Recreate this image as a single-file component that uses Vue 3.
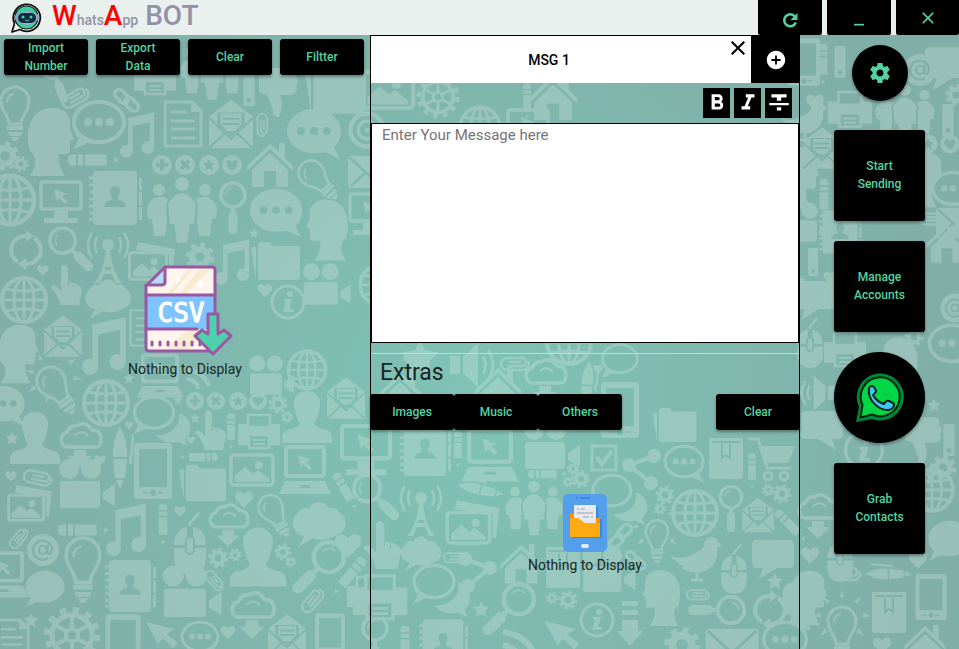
<script setup>
import { ref } from 'vue'

const message = ref('')

// Backdrop doodles: each entry is [x, y, scale, rotation, flip]
const doodles = {
  bulb: [[15, 112, 1], [318, 180, .9, -45], [275, 515, .85, -30], [83, 568, 1.2], [57, 390, 1, -35], [657, 540, .8], [842, 632, 1]],
  rays: [[57, 382, 1, -35], [657, 534, .9], [842, 624, 1]],
  head: [[50, 142, 1], [328, 230, .9, 0, 1], [18, 354, .86], [662, 598, .82, 0, 1], [798, 178, .9], [925, 180, .8], [808, 598, .8], [797, 606, .7, 0, 1], [900, 365, .8, 0, 1]],
  dots: [[314, 133, 1], [276, 212, .97], [3, 405, .8]],
  dotsO: [[99, 124, 1, 0, 1], [200, 638, .72], [684, 463, .76], [953, 190, .8], [952, 345, .9], [785, 641, .85]],
  bubble: [[45, 588, .72, 0, 1], [950, 540, .8, 0, 1], [870, 192, .9]],
  bubbleO: [[154, 414, .78, 0, 1], [612, 492, .76, 0, 1], [434, 583, .8, 0, 1], [620, 360, .7, 0, 1]],
  back: [[175, 428, 1], [632, 507, 1], [454, 598, 1.05]],
  rect: [[773, 557, 1, 0, 1], [948, 66, 1.1, 0, 1], [815, 298, 1, 0, 1], [822, 428, 1]],
  note: [[138, 135, .9], [233, 262, .9], [105, 346, 1.15], [127, 530, 1.05]],
  doc: [[183, 124, 1], [145, 328, .8], [12, 640, .9]],
  mail: [[231, 124, 1.05], [63, 336, .9], [346, 398, .9], [287, 635, .9], [758, 515, .75], [822, 148, .9]],
  envelope: [[370, 172, 1], [732, 648, 1.2], [957, 223, .95]],
  clip: [[75, 97, 1, -30], [263, 125, .8, 90], [38, 477, 1, 12], [18, 538, .8, -50], [312, 600, .95, -50], [215, 580, .8, 50], [455, 557, .8], [698, 594, .8], [515, 363, 1], [932, 218, .9], [846, 573, 1]],
  chain: [[127, 100, 1], [620, 536, 1, -90], [636, 560, .8]],
  pencil: [[92, 160, 1], [200, 457, .75, 180], [82, 530, 1], [163, 523, .8, 90], [231, 430, .7, 90], [345, 490, .8, 60], [350, 575, .9, 130], [752, 470, .7, 90], [546, 474, .75], [790, 525, .8, 45], [405, 645, .8, 90], [823, 63, .8, 90], [824, 198, .8, 90], [458, 448, .7, 90], [527, 100, .7, 90]],
  globe: [[10, 200, 1.1], [24, 300, 1], [106, 403, 1], [695, 513, 1], [932, 490, .95], [569, 342, 1], [480, 127, .9], [380, 285, .9], [307, 370, .85]],
  monitor: [[61, 202, 1], [370, 214, 1], [366, 450, 1.2], [528, 130, 1]],
  contacts: [[115, 198, 1], [130, 586, .96], [425, 450, .96], [443, 644, .92], [840, 232, .8]],
  people: [[182, 210, 1], [212, 70, .9], [534, 508, .82], [905, 112, .85]],
  lens: [[233, 205, 1], [70, 248, 1.05, -45], [320, 566, 1.25, 45], [375, 496, 1.1, -45], [731, 506, .9], [720, 610, 1.1, 90], [510, 608, 1.25, 45], [375, 638, 1], [55, 75, 1, -20]],
  house: [[270, 163, 1], [521, 562, .9], [400, 392, 1], [498, 387, 1], [553, 95, 1.05], [947, 241, .9], [925, 643, .9]],
  plus: [[162, 165, 1], [195, 401, .9]],
  cross: [[185, 165, 1], [216, 401, .9]],
  starBadge: [[209, 165, 1], [238, 401, .9], [928, 144, .95]],
  heartBadge: [[232, 165, 1], [258, 401, .9], [950, 144, .95]],
  gear: [[5, 156, 1.2], [21, 164, .65], [200, 257, 1.2], [278, 404, .8], [287, 417, .5], [218, 558, .85], [235, 555, .55], [283, 552, .7], [291, 562, .45], [573, 469, .5], [581, 479, .75], [568, 482, .45], [665, 495, .8], [660, 509, .5], [768, 490, .5], [782, 494, .8], [552, 598, .5], [568, 600, .8], [682, 645, 1.5], [914, 337, .8], [898, 344, .6], [943, 468, 1.1], [926, 478, .55], [956, 95, .9]],
  wheel: [[72, 635, 1.25], [438, 97, .95]],
  reload: [[26, 250, 1], [770, 610, 1]],
  tower: [[108, 257, 1], [421, 510, 1]],
  photos: [[152, 261, 1], [30, 503, .95], [473, 522, 1.15]],
  picture: [[252, 470, 1], [388, 90, 1.2]],
  folder: [[276, 261, 1], [203, 483, .96], [336, 90, 1.25], [675, 425, .9]],
  hand: [[66, 285, 1], [210, 430, 1], [382, 545, 1.2]],
  cloud: [[108, 297, 1, 0, 1], [319, 522, 1.15, 0, 1], [421, 552, .88, 0, 1]],
  cloudDown: [[80, 444, 1], [228, 524, .95], [252, 614, 1.05], [545, 380, 1], [818, 515, 1]],
  heart: [[43, 270, .7], [265, 290, .9], [11, 476, .7], [100, 460, .7], [129, 425, .5], [244, 499, 1.1], [180, 511, .7], [348, 545, 1.6], [228, 632, .9], [191, 440, .5], [815, 102, 1.1], [810, 555, 1.1], [918, 560, 1.1], [882, 645, 1.1], [411, 360, .9], [598, 369, .6], [830, 277, .8]],
  star: [[254, 233, .6], [12, 438, .8], [178, 400, .6], [195, 418, .6], [129, 378, .7], [481, 609, 1], [775, 581, 1], [31, 620, .9], [934, 405, .8], [420, 357, 2.3], [590, 532, .6], [802, 280, .5]],
  camcorder: [[325, 287, .85], [85, 487, 1], [190, 595, 1.05], [550, 448, 1], [607, 572, .95], [270, 378, .8], [805, 225, .8]],
  info: [[288, 302, 1], [597, 620, 1], [864, 450, 1.15]],
  bust: [[35, 438, 1], [307, 417, 1], [258, 557, 1.13]],
  pen: [[120, 460, 1, 90], [482, 490, .75, 12], [587, 387, .8, 95], [890, 574, .75]],
  printer: [[155, 78, 1], [259, 432, 1], [368, 594, 1], [380, 598, 1.3], [850, 110, 1.05], [845, 350, 1]],
  laptop: [[305, 470, 1], [490, 455, 1.1], [160, 376, .9], [4, 575, .95]],
  tablet: [[153, 471, 1], [123, 640, .92], [330, 635, .78], [804, 62, .85], [931, 597, .82], [620, 410, 1]],
  mouse: [[190, 545, 1], [734, 570, .8], [810, 344, .8], [840, 558, .8]],
  at: [[43, 550, 1], [920, 70, 1], [955, 308, .9]],
  cursor: [[162, 632, 1], [562, 632, 1.1]],
  target: [[367, 130, 1.1]],
  usb: [[249, 90, .8], [840, 62, .8], [948, 120, .8], [813, 262, .7], [949, 440, .8]],
  thumb: [[277, 92, 1], [922, 440, .95]],
  share: [[642, 470, 1], [477, 573, 1, 0, 1]],
  check: [[604, 458, 1]],
  box: [[726, 458, 1], [563, 567, 1], [889, 612, 1]],
  cart: [[775, 455, 1]],
  bird: [[697, 558, 1], [805, 120, .9]],
  arrow: [[630, 625, 1]],
  speaker: [[470, 365, 1], [820, 393, .8, 0, 1]],
  wave: [[515, 640, 1], [195, 375, .7]],
}

const placed = Object.entries(doodles).flatMap(([name, spots]) =>
  spots.map(([x, y, scale, turn = 0, flip = 0], i) => ({
    key: name + i,
    href: '#d-' + name,
    transform: `translate(${x} ${y}) rotate(${turn}) scale(${flip ? -scale : scale} ${scale})`,
  })),
)
</script>

<template>
  <div class="app">
    <svg class="backdrop" viewBox="0 0 959 649" preserveAspectRatio="xMidYMid slice" aria-hidden="true">
      <defs>
        <g id="d-bulb"><path d="M-6 12C-6 3-14 0-14-11A14 14 0 0 1 14-11C14 0 6 3 6 12Z" fill="none" stroke="#fff" stroke-width="3" /><path d="M-8-9A8 8 0 0 1-1-18" fill="none" stroke="#fff" stroke-width="2" /><path d="M-8 14H8V18H-8ZM-7 20H7L6 24H-6ZM-4 25H4L2 29H-2Z" /></g>
        <g id="d-rays"><path d="M-29-8L-21-6V-11ZM29-8L21-6V-11ZM-20-28L-15-20-12-23ZM20-28L15-20 12-23ZM-22 12L-17 4-14 8ZM22 12L17 4 14 8ZM-2-27H2L0-34Z" /></g>
        <g id="d-head"><path d="M-20 34C-12 22-14 13-20 9C-26-10-20-34 2-34C18-34 22-23 20-13L24-3 20-1V8Q20 13 14 12L9 12Q7 23 15 34Z" /></g>
        <g id="d-bubble"><path d="M0-24C15-24 27-14 27-2C27 6 23 12 20 14L26 26 11 19C-10 24-27 13-27-2C-27-14-15-24 0-24Z" /></g>
        <g id="d-dots"><use href="#d-bubble" /><g fill="#000"><circle cx="-13" cy="-2" r="4" /><circle cy="-2" r="4" /><circle cx="13" cy="-2" r="4" /></g></g>
        <g id="d-bubbleO"><use href="#d-bubble" /><ellipse cy="-2" rx="23" ry="18" fill="#000" /></g>
        <g id="d-dotsO"><use href="#d-bubbleO" /><circle cx="-11" cy="-2" r="4" /><circle cy="-2" r="4" /><circle cx="11" cy="-2" r="4" /></g>
        <g id="d-back"><path d="M4-15C18-10 18 6 10 11L13 18 3 14C-8 16-15 12-19 7C-4 8 6-2 4-15Z" /></g>
        <g id="d-rect"><path d="M-16-17H16Q21-17 21-12V6Q21 11 16 11H10L14 22-4 11H-16Q-21 11-21 6V-12Q-21-17-16-17Z" /></g>
        <g id="d-note"><path d="M-11-19L18-25V15H13V-14L-6-10V18H-11Z" /><circle cx="-13" cy="18" r="7" /><circle cx="11" cy="14" r="7" /></g>
        <g id="d-doc"><path d="M-18-22H9L18-13V22H-18Z" fill="none" stroke="#fff" stroke-width="3" stroke-linejoin="round" /><path d="M8-22V-12H18" fill="#fff" /><path d="M-12-12H4M-12-3H12M-12 5H12M-12 14H12" stroke="#fff" stroke-width="3" /></g>
        <g id="d-mail"><path d="M-21-7L0-23 21-7V23H-21Z" /><path d="M-13-11H13V1L0 12-13 1Z" fill="#000" /><path d="M-10-10H10V0L4 7H-4L-10 0Z" /><path d="M-8-5H8M-8 0H8" stroke="#000" stroke-width="2" /><path d="M-21 23L-5 8M21 23L5 8M-21-6L0 14 21-6" fill="none" stroke="#000" stroke-width="2" /></g>
        <g id="d-envelope"><rect x="-22" y="-16" width="44" height="32" rx="3" /><path d="M-20-14L0 4 20-14M-19 14L-5 1M19 14L5 1" fill="none" stroke="#000" stroke-width="2.5" /></g>
        <g id="d-clip" fill="none" stroke="#fff" stroke-width="2.5"><path d="M-7 3H7A4 4 0 0 0 7-5H-8A6 6 0 0 0-8 7H9" /><path d="M9 7A6 6 0 0 0 13-2" /><path d="M-6-1H6" /></g>
        <g id="d-chain" fill="none" stroke="#fff" stroke-width="3.5"><rect x="-13" y="-8" width="16" height="9" rx="4.500" transform="rotate(45 -5 -4)" /><rect x="-3" y="0" width="16" height="9" rx="4.500" transform="rotate(45 5 4)" /></g>
        <g id="d-pencil"><path d="M-20-5.500Q-24-5.500-24 0T-20 5.500H-16V-5.500ZM-14-5.500H-9V5.500H-14ZM-7-5.500H15L14-2 15 1 14 5.500H-7ZM22-3L27 0 22 3Z" /></g>
        <g id="d-globe" fill="none" stroke="#fff"><circle r="22" stroke-width="4" /><ellipse rx="10" ry="22" stroke-width="3" /><path d="M0-22V22M-22 0H22M-18-11Q0-7 18-11M-18 11Q0 7 18 11" stroke-width="3" /></g>
        <g id="d-monitor"><rect x="-20" y="-20" width="40" height="27" rx="2" fill="none" stroke="#fff" stroke-width="3.500" /><path d="M-7-13L6-8 1-6 7 0 4 2-2-4-4 0ZM-7 9H7V16H17V21H-17V16H-7Z" /></g>
        <g id="d-contacts"><rect x="-22" y="-27" width="44" height="54" rx="4" /><path d="M-26-20H-20M-26-13H-20M-26-6H-20M-26 1H-20M-26 8H-20M-26 15H-20M-26 21H-20" stroke="#fff" stroke-width="3" /><path d="M24-20H27V-8H24ZM24-6H27V7H24ZM24 9H27V22H24Z" /><path d="M0-12C6-12 6-5 3-1V2Q11 3 11 9H-11Q-11 3-3 2V-1C-6-5-6-12 0-12Z" fill="#000" /></g>
        <g id="d-people"><circle cy="-26" r="7" /><circle cx="-23" cy="-20" r="6" /><circle cx="23" cy="-20" r="6" /><path d="M-14-6Q0-28 14-6L12 14H8L5 33H-5L-8 14H-12ZM-35-2Q-29-18-14-11L-16-5-15 13-17 26H-28L-30 9-34 8ZM35-2Q29-18 14-11L16-5 15 13 17 26H28L30 9 34 8Z" /></g>
        <g id="d-lens"><circle cy="-10" r="12" fill="none" stroke="#fff" stroke-width="3.500" /><path d="M-7-10A7 7 0 0 1 0-17" fill="none" stroke="#fff" stroke-width="1.500" /><rect x="-2" y="3" width="4" height="5" /><rect x="-4.500" y="7" width="9" height="22" rx="4" /></g>
        <g id="d-house"><path d="M-23 3L0-19 9-11V-20H15V-5L23 3V8L0-14-23 8Z" /><path d="M-18 7L0-10 18 7V24H6V8H-6V24H-18Z" /></g>
        <g id="d-disc"><circle r="10" /></g>
        <g id="d-plus"><use href="#d-disc" /><path d="M-6 0H6M0-6V6" stroke="#000" stroke-width="3.500" /></g>
        <g id="d-cross"><use href="#d-disc" /><path d="M-4-4L4 4M4-4L-4 4" stroke="#000" stroke-width="3.500" /></g>
        <g id="d-star"><path d="M0-8L2-3 8-2 4 2 5 8 0 5-5 8-4 2-8-2-2-3Z" /></g>
        <g id="d-heart"><path d="M0 8L-7 1C-11-5-4-10 0-4C4-10 11-5 7 1Z" /></g>
        <g id="d-starBadge"><use href="#d-disc" /><path d="M0-6L2-2 6-2 3 1 4 6 0 3-4 6-3 1-6-2-2-2Z" fill="#000" /></g>
        <g id="d-heartBadge"><use href="#d-disc" /><path d="M0 6L-5 1C-8-4-3-7 0-3C3-7 8-4 5 1Z" fill="#000" /></g>
        <g id="d-gear"><circle r="6.500" fill="none" stroke="#fff" stroke-width="5" /><circle r="10" fill="none" stroke="#fff" stroke-width="4" stroke-dasharray="4 3.854" /></g>
        <g id="d-wheel" fill="none" stroke="#fff"><circle r="16" stroke-width="4" /><circle r="20" stroke-width="5" stroke-dasharray="5 5.472" /><circle r="5" stroke-width="3" /><path d="M0-16V-5M0 16V5M-14-8L-4-3M14 8L4 3M-14 8L-4 3M14-8L4-3" stroke-width="3" /></g>
        <g id="d-reload"><path d="M-8 12A14 14 0 0 1 0-14M8-12A14 14 0 0 1 0 14" fill="none" stroke="#fff" stroke-width="4" /><path d="M0-20V-8L8-14ZM0 20V8L-8 14Z" /></g>
        <g id="d-tower"><circle cy="-12" r="6" /><path d="M-2-8H2Q4 16 14 26H8L4 17H-4L-8 26H-14Q-4 16-2-8Z" /><path d="M-3 10H3V13H-3Z" fill="#000" /><path d="M-11-20Q-15-12-11-4M11-20Q15-12 11-4M-16-24Q-24-12-16 1M16-24Q24-12 16 1" fill="none" stroke="#fff" stroke-width="2.500" /></g>
        <g id="d-picture"><rect x="-21" y="-15" width="42" height="30" rx="3" fill="none" stroke="#fff" stroke-width="3.500" /><circle cx="7" cy="-5" r="4" /><path d="M-17 12V6L-7-3 1 4 6 0 17 9V12Z" /></g>
        <g id="d-photos"><path d="M-14-19L23-12 20 14H17V-7L-16-11Z" /><g transform="translate(-4 5) scale(.88)"><use href="#d-picture" /></g></g>
        <g id="d-folder"><path d="M-18-16Q-18-19-15-19H-6L-3-15H21Q24-15 24-12V16Q24 19 21 19H-15Q-18 19-18 16ZM-25-14H-20V18Z" /></g>
        <g id="d-hand"><path d="M-5-16Q-5-20-2-20T2-16V-3Q15-2 16 5L13 20H-5Q-8 9-15 3Q-15-1-10 1L-5 6Z" /><path d="M2 1V-3M7 2V-1" stroke="#000" /></g>
        <g id="d-cloud"><path d="M-14 12A11 11 0 0 1-18-8Q-15-14-9-12Q0-23 9-12Q15-14 18-8A11 11 0 0 1 13 12L18 22 5 14Q-4 18-14 12Z" /></g>
        <g id="d-cloudDown"><path d="M-14 3A8 8 0 0 1-13-12Q-10-19-4-18Q5-24 12-14Q21-14 21-5T14 3Z" fill="none" stroke="#fff" stroke-width="3.500" /><path d="M-5-9Q2-15 8-8" fill="none" stroke="#fff" stroke-width="2" /><path d="M-6 6H6V12H12L0 24-12 12H-6Z" /></g>
        <g id="d-camcorder"><circle cx="-16" cy="-18" r="10" /><circle cx="6" cy="-18" r="10" /><rect x="-25" y="-6" width="40" height="27" rx="3" /><path d="M18 5L30-3V19L18 12Z" /></g>
        <g id="d-info"><circle r="16" fill="none" stroke="#fff" stroke-width="3" /><circle cx="2" cy="-8" r="3" /><path d="M-4-3H4L1 7H5V10H-5L-2 0H-4Z" /></g>
        <g id="d-bust"><path d="M0-26C13-26 15-13 12-7Q10 3 7 6Q8 11 20 13Q26 15 25 26H-25Q-26 15-20 13Q-8 11-7 6Q-10 3-12-7C-15-13-13-26 0-26Z" /></g>
        <g id="d-pen"><path d="M-33 0Q-20-8-3-7V7Q-20 8-33 0ZM-1-7L18-5V5L-1 7ZM20-4L29 0 20 4ZM-28-12L4-9V-12L-22-14Z" /></g>
        <g id="d-printer"><path d="M-20-7H20V12H-20Z" stroke="#fff" stroke-linejoin="round" stroke-width="2" /><path d="M-11-17H11V-5H-11ZM-10 3H10V16H-10Z" fill="#000" stroke="#fff" stroke-width="2.500" /><path d="M-6 8H6M-6 12H6" stroke="#fff" stroke-width="2" /></g>
        <g id="d-laptop"><rect x="-19" y="-23" width="38" height="29" rx="2" fill="none" stroke="#fff" stroke-width="4" /><path d="M-7-15L6-10 1-8 7-2 4 0-2-6-4-2ZM-20 11H20L26 24H-26Z" /><path d="M-4 15H4L6 18H-6Z" fill="#000" /></g>
        <g id="d-tablet"><rect x="-19" y="-28" width="38" height="56" rx="4" /><rect x="-14" y="-22" width="28" height="38" fill="#000" /><circle cy="22" r="3" fill="#000" /><path d="M-10 22H-5M5 22H10" stroke="#000" stroke-width="1.500" /></g>
        <g id="d-mouse"><path d="M-16 0Q-15-16-3-18V-3H3V-18Q15-16 16 0ZM-16 3H16V14Q14 30 0 30T-16 14Z" /><rect x="-4" y="-8" width="8" height="17" rx="4" stroke="#000" stroke-width="2" /><path d="M0-19Q-1-23 3-25L9-32" fill="none" stroke="#fff" stroke-width="3" /></g>
        <g id="d-at"><circle r="16" /><g fill="none" stroke="#000" stroke-width="2.200"><circle r="4" /><path d="M5-5L4 3Q8 6 9-1A9.500 9.500 0 1 0 5 8" /></g></g>
        <g id="d-cursor"><path d="M-16-10L13-3 5 2 16 11 11 16 1 6-4 12Z" /></g>
        <g id="d-target"><circle r="15" fill="none" stroke="#fff" stroke-width="4" /><circle r="8" fill="none" stroke="#fff" stroke-width="3" /><circle r="2" /></g>
        <g id="d-usb"><rect x="-7" y="-20" width="14" height="40" rx="2" /><circle cy="13" r="3" fill="#000" /></g>
        <g id="d-thumb"><path d="M-18-24H13Q20-23 18-16Q23-11 19-6Q22 0 15 3H3Q7 15 2 25Q-5 26-4 18L-10 3-18 0Z" /></g>
        <g id="d-share"><path d="M-13-5L12-14M-13-5L9 13" stroke="#fff" stroke-width="4" /><circle cx="-13" cy="-5" r="7" /><circle cx="12" cy="-14" r="7" /><circle cx="9" cy="13" r="7" /></g>
        <g id="d-check" fill="none" stroke="#fff"><rect x="-12" y="-12" width="24" height="24" stroke-width="3" /><path d="M-7-1L-2 6 8-7" stroke-width="4" /></g>
        <g id="d-box"><path d="M-17-20H17V18Q17 21 14 21H-14Q-17 21-17 18Z" /><path d="M-14-16H14M-4-14V0L0-3 4 0V-14" fill="none" stroke="#000" stroke-width="2" /></g>
        <g id="d-cart"><path d="M-27-16H-17L-8 13H16" fill="none" stroke="#fff" stroke-width="3" /><path d="M-15-9H20L13 8H-10Z" /><g fill="none" stroke="#fff" stroke-width="3"><circle cx="-7" cy="21" r="4" /><circle cx="9" cy="21" r="4" /></g></g>
        <g id="d-bird"><path d="M-26-2Q-14 3 0-6Q6-8 7-13C9-24 20-22 21-16L25-12 20-10C22 4 13 14 0 15Q-12 14-16 9L-12 8Q-19 7-20 3Q-25 2-26-2Z" /><path d="M0 14V22M-6 22H6" stroke="#fff" stroke-width="3" /></g>
        <g id="d-arrow"><path d="M-8-24H8V-19H-8ZM-8-15H8V-10H-8ZM-8-5H8V6H13L0 21-13 6H-8Z" /></g>
        <g id="d-speaker"><path d="M-20-9H-10V9H-20ZM-7-8L8-22V22L-7 8Z" /><path d="M13-9Q18 0 13 9M18-15Q28 0 18 15" fill="none" stroke="#fff" stroke-width="3" /></g>
        <g id="d-wave" fill="none" stroke="#fff" stroke-width="6"><path d="M-12-8Q12-5 20 16M-12 5Q3 8 5 20" /></g>
        <radialGradient id="glow" gradientUnits="userSpaceOnUse" cx="470" cy="400" r="480">
          <stop offset="0" stop-color="#7fc3b6" />
          <stop offset=".45" stop-color="#7fbaaf" />
          <stop offset="1" stop-color="#80afa8" />
        </radialGradient>
        <mask id="doodle-mask" maskUnits="userSpaceOnUse" x="0" y="0" width="959" height="649">
          <g fill="#fff">
            <use v-for="d in placed" :key="d.key" :href="d.href" :transform="d.transform" />
          </g>
        </mask>
      </defs>
      <rect width="959" height="649" fill="url(#glow)" />
      <rect width="959" height="649" fill="#fff" opacity=".2" mask="url(#doodle-mask)" />
    </svg>

    <header class="titlebar">
      <svg class="logo" viewBox="0 0 32 32" aria-hidden="true">
        <path d="M4.500 21.500A13.500 13.500 0 1 1 10 27.500L2 30Z" fill="#fff" stroke="#111" stroke-width="1.800" stroke-linejoin="round" />
        <circle cx="16.500" cy="15.500" r="11.500" fill="#40cba0" stroke="#111" stroke-width="1.200" />
        <path d="M9 12Q17 7 25 12V20Q17 26 9 20Z" fill="#9cb2d0" />
        <rect x="5" y="12" width="24" height="7" rx="3" fill="#8aa4c4" />
        <rect x="8" y="11" width="18" height="10" rx="5" fill="#172845" />
        <circle cx="13" cy="15" r="1.500" fill="#39d9a0" /><circle cx="21" cy="15" r="1.500" fill="#39d9a0" />
        <path d="M15 18Q17 20 19 18" fill="none" stroke="#39d9a0" />
      </svg>
      <h1 class="brand"><span class="cap">W</span><span class="low">hats</span><span class="cap">A</span><span class="low">pp</span> BOT</h1>
      <nav class="window-controls">
        <button class="win" aria-label="Refresh">
          <svg viewBox="0 0 24 24" class="i24 drop"><path d="M16.800 8.300A6 6 0 1 0 17.800 14.500" fill="none" stroke="currentColor" stroke-width="2.600" /><path d="M19.500 5V12H12.500Z" fill="currentColor" /></svg>
        </button>
        <button class="win" aria-label="Minimize">
          <svg viewBox="0 0 24 24" class="i20"><path d="M6 19h12v2H6z" fill="currentColor" /></svg>
        </button>
        <button class="win" aria-label="Close">
          <svg viewBox="0 0 24 24" class="i20"><path d="M19 6.410L17.590 5 12 10.590 6.410 5 5 6.410 10.590 12 5 17.590 6.410 19 12 13.410 17.590 19 19 17.590 13.410 12z" fill="currentColor" /></svg>
        </button>
      </nav>
    </header>

    <main class="columns">
      <section class="numbers">
        <div class="actions">
          <button class="btn">Import Number</button>
          <button class="btn">Export Data</button>
          <button class="btn">Clear</button>
          <button class="btn">Filtter</button>
        </div>
        <div class="empty">
          <svg class="csv" viewBox="0 0 90 92" aria-hidden="true">
            <path d="M22 3H69Q72 3 72 6V84Q72 87 69 87H7Q3 87 3 84V22Z" fill="#fff5ec" />
            <path d="M36 30L58 3H70L43 30ZM24 30L47 3H52L29 30ZM22 87L46 64H66L44 87Z" fill="#f7ecd2" />
            <path d="M3 31H72V65H3Z" fill="#7fc4ff" />
            <path d="M22 3V18Q22 21 18 21H3Z" fill="#b9dafc" />
            <g fill="none" stroke="#9a57a2" stroke-width="3" stroke-linejoin="round" stroke-linecap="round">
              <path d="M22 3H69Q72 3 72 6V84Q72 87 69 87H7Q3 87 3 84V22Z" />
              <path d="M22 3V18Q22 21 18 21H3M3 31H72M3 65H54" />
              <path d="M9 78V81M17 78V81M25 78V81M33 78V81M41 78V81M49 78V81M57 78V81" />
            </g>
            <path d="M34 12L35 15 38 16 35 17 34 20 33 17 30 16 33 15ZM57 14L59 19 63 20 59 22 57 26 55 22 51 20 55 19Z" fill="#fff" />
            <text x="38" y="58" class="csv-text">CSV</text>
            <path d="M65 50H75V70L81 66 88 72 70 90 52 72 59 66 65 70Z" fill="#4fd0ad" stroke="#9a57a2" stroke-width="3" stroke-linejoin="round" />
          </svg>
          <p class="hint">Nothing to Display</p>
        </div>
      </section>

      <section class="composer">
        <div class="tabs">
          <div class="tab">
            <button class="tab-name">MSG 1</button>
            <button class="tab-close" aria-label="Close message">
              <svg viewBox="0 0 24 24" class="i24"><path d="M19 6.410L17.590 5 12 10.590 6.410 5 5 6.410 10.590 12 5 17.590 6.410 19 12 13.410 17.590 19 19 17.590 13.410 12z" fill="currentColor" /></svg>
            </button>
          </div>
          <button class="add" aria-label="Add message">
            <svg viewBox="0 0 24 24" class="i22"><path d="M12 2C6.480 2 2 6.480 2 12s4.480 10 10 10 10-4.480 10-10S17.520 2 12 2zm5 11h-4v4h-2v-4H7v-2h4V7h2v4h4v2z" fill="currentColor" /></svg>
          </button>
        </div>
        <div class="format">
          <button class="fmt" aria-label="Bold"><svg viewBox="0 0 24 24" class="i26"><path d="M15.600 10.790c.97-.67 1.650-1.770 1.650-2.790 0-2.260-1.750-4-4-4H7v14h7.040c2.090 0 3.710-1.700 3.710-3.790 0-1.520-.86-2.820-2.150-3.420zM10 6.500h3c.83 0 1.500.67 1.500 1.500s-.67 1.500-1.500 1.500h-3v-3zm3.500 9H10v-3h3.500c.83 0 1.500.67 1.500 1.500s-.67 1.500-1.500 1.500z" fill="currentColor" /></svg></button>
          <button class="fmt" aria-label="Italic"><svg viewBox="0 0 24 24" class="i26"><path d="M10 4v3h2.210l-3.420 8H6v3h8v-3h-2.210l3.420-8H18V4z" fill="currentColor" /></svg></button>
          <button class="fmt" aria-label="Strikethrough"><svg viewBox="0 0 24 24" class="i26"><path d="M10 19h4v-3h-4v3zM5 4v3h5v3h4V7h5V4H5zM3 14h18v-2H3v2z" fill="currentColor" /></svg></button>
        </div>
        <textarea v-model="message" class="message" aria-label="Message" placeholder="Enter Your Message here"></textarea>
        <hr class="rule" />
        <h2 class="extras-title">Extras</h2>
        <div class="extras">
          <button class="btn">Images</button>
          <button class="btn">Music</button>
          <button class="btn">Others</button>
          <button class="btn last">Clear</button>
        </div>
        <div class="empty files">
          <svg class="phone" viewBox="0 0 44 58" aria-hidden="true">
            <rect width="44" height="58" rx="5" fill="#549fec" />
            <path d="M13 3H15V5H13ZM17 3H27V5H17Z" fill="#3c86e2" />
            <path d="M13 13H35V25H39V44H9V22Z" fill="#3c86e2" />
            <path d="M7 20Q7 19 8 19H12V24H37V40H7ZM33 24H36Q37 24 37 26V30H33Z" fill="#ff9100" />
            <path d="M11 11H33V32H11Z" fill="#e6e9ee" />
            <path d="M14 14H16V16H14ZM18 14H22V16H18ZM14 18H30V20H14ZM20 22H26V24H20ZM28 22H30V24H28Z" fill="#bfc3ca" />
            <path d="M7 24H15L22 29H37V42Q37 43 36 43H8Q7 43 7 42Z" fill="#ffaa10" />
            <rect x="18" y="50" width="8" height="4" rx="2" fill="#e6e9ee" />
          </svg>
          <p class="hint">Nothing to Display</p>
        </div>
      </section>

      <aside class="side">
        <button class="round small" aria-label="Settings">
          <svg viewBox="0 0 24 24" class="i24"><path d="M19.430 12.980c.04-.32.07-.64.07-.98s-.03-.66-.07-.98l2.110-1.650c.19-.15.24-.42.12-.64l-2-3.460c-.12-.22-.39-.3-.61-.22l-2.490 1c-.52-.4-1.080-.73-1.690-.98l-.38-2.650C14.460 2.180 14.250 2 14 2h-4c-.25 0-.46.18-.49.42l-.38 2.650c-.61.25-1.170.59-1.690.98l-2.490-1c-.23-.09-.49 0-.61.22l-2 3.460c-.13.22-.07.49.12.64l2.110 1.650c-.04.32-.07.65-.07.98s.03.66.07.98l-2.110 1.650c-.19.15-.24.42-.12.64l2 3.460c.12.22.39.3.61.22l2.490-1c.52.4 1.080.73 1.690.98l.38 2.650c.03.24.24.42.49.42h4c.25 0 .46-.18.49-.42l.38-2.650c.61-.25 1.170-.59 1.690-.98l2.490 1c.23.09.49 0 .61-.22l2-3.460c.12-.22.07-.49-.12-.64l-2.110-1.650zM12 15.500c-1.930 0-3.500-1.570-3.500-3.500s1.570-3.500 3.500-3.500 3.500 1.570 3.500 3.500-1.570 3.500-3.500 3.500z" fill="currentColor" /></svg>
        </button>
        <button class="tile">Start Sending</button>
        <button class="tile">Manage Accounts</button>
        <button class="round" aria-label="WhatsApp">
          <svg viewBox="0 0 50 50" class="i50">
            <path d="M4 34A23.500 23.500 0 1 1 17 46L1 49Z" fill="#00893b" />
            <path d="M7.500 32A19.500 19.500 0 1 1 17 41.500L5.500 44.500Z" fill="#00d646" stroke="#021" stroke-width="2" stroke-linejoin="round" />
            <path d="M14 15C17 11 20 14 21 18Q21 20 18 22Q22 29 29 31Q31 27 34 28L38 30C41 33 37 36 34 37C24 38 12 27 14 15Z" fill="#40c4ff" stroke="#021" stroke-width="2" stroke-linejoin="round" />
          </svg>
        </button>
        <button class="tile">Grab Contacts</button>
      </aside>
    </main>
  </div>
</template>

<style>
body {
  margin: 0;
  overflow: hidden;
}
</style>

<style scoped>
.app {
  position: relative;
  isolation: isolate;
  display: flex;
  flex-direction: column;
  min-height: 100vh;
  font-family: Roboto, "Liberation Sans", sans-serif;
  color: #1c2523;
}
.app * {
  box-sizing: border-box;
}
.backdrop {
  position: absolute;
  inset: 0;
  z-index: -1;
  width: 100%;
  height: 100%;
}
button {
  margin: 0;
  padding: 0;
  border: 0;
  background: #000;
  color: #54d3a2;
  font: 500 12px/18px Roboto, "Liberation Sans", sans-serif;
  cursor: pointer;
}
svg {
  display: block;
}
.i20 { width: 20px; height: 20px; }
.i22 { width: 22px; height: 22px; }
.i24 { width: 24px; height: 24px; }
.i26 { width: 26px; height: 26px; }
.i50 { width: 50px; height: 50px; }
.titlebar {
  display: flex;
  align-items: center;
  height: 35px;
  padding-left: 10px;
  background: #eaf0ee;
}
.logo {
  width: 32px;
  height: 32px;
}
.brand {
  flex: 1;
  margin: 0 0 0 10px;
  font-size: 28px;
  line-height: 34px;
  font-weight: 500;
  color: #9491a6;
}
.cap { color: #f00; }
.low { font-size: 14px; }
.window-controls {
  display: flex;
  align-self: stretch;
  gap: 5px;
}
.win {
  display: grid;
  place-items: center;
  width: 64px;
  border-radius: 0 0 2px 2px;
}
.win:last-child { width: 63px; }
.drop { margin-top: 4px; }
.columns {
  flex: 1;
  display: grid;
  grid-template-columns: 370fr 430fr 159fr;
}
.numbers,
.composer {
  display: flex;
  flex-direction: column;
}
.actions {
  display: flex;
  gap: 8px;
  padding: 4px;
}
.btn {
  width: 84px;
  height: 36px;
  padding: 0 16px;
  border-radius: 3px;
  box-shadow: 0 2px 3px rgba(0, 0, 0, .35);
}
.empty {
  flex: 1;
  display: flex;
  flex-direction: column;
  align-items: center;
  justify-content: center;
  padding-bottom: 82px;
}
.files {
  padding-bottom: 8px;
}
.csv {
  width: 90px;
  height: 92px;
  margin-left: 6px;
}
.csv-text {
  font: 400 26px "DejaVu Sans Mono", monospace;
  text-anchor: middle;
  fill: #fff;
  stroke: #fff;
  stroke-width: 1px;
}
.phone {
  width: 44px;
  height: 58px;
}
.hint {
  margin: 0;
  font-size: 14px;
  line-height: 26px;
}
.composer {
  border: solid #000;
  border-width: 1px 1px 0;
}
.tabs {
  display: flex;
  height: 47px;
  margin-right: -1px;
}
.tab {
  position: relative;
  flex: 1;
  display: flex;
  background: #fff;
}
.tab-name {
  flex: 1;
  padding-right: 24px;
  background: none;
  color: #000;
  font-size: 14px;
}
.tab-close {
  position: absolute;
  top: 0;
  right: 1px;
  background: none;
  color: #000;
}
.add {
  display: grid;
  place-items: center;
  width: 49px;
  color: #fff;
}
.format {
  display: flex;
  justify-content: flex-end;
  gap: 4px;
  padding: 5px 7px;
}
.fmt {
  display: grid;
  place-items: center;
  width: 27px;
  height: 30px;
  color: #fff;
}
.message {
  display: block;
  width: 100%;
  height: 220px;
  padding: 2px 10px;
  border: 1px solid #000;
  border-radius: 0;
  outline: 0;
  resize: none;
  background: #fff;
  font: 400 15px/18px Roboto, "Liberation Sans", sans-serif;
}
.message::placeholder { color: #757575; }
.rule {
  width: 100%;
  height: 1px;
  margin: 10px 0 0;
  border: 0;
  background: #ccd6d3;
}
.extras-title {
  margin: 0;
  padding: 0 9px 2px;
  font-size: 23px;
  line-height: 38px;
  font-weight: 400;
}
.extras {
  display: flex;
  margin: 0 -1px;
}
.last { margin-left: auto; }
.side {
  display: flex;
  flex-direction: column;
  align-items: center;
  gap: 20px;
  padding: 10px 0;
}
.tile,
.round {
  width: 91px;
  height: 91px;
  box-shadow: 0 2px 3px rgba(0, 0, 0, .35);
}
.tile {
  padding: 0 16px 2px;
  border-radius: 3px;
}
.round {
  display: grid;
  place-items: center;
  border-radius: 50%;
}
.small {
  width: 56px;
  height: 56px;
  margin-bottom: 9px;
}
</style>
